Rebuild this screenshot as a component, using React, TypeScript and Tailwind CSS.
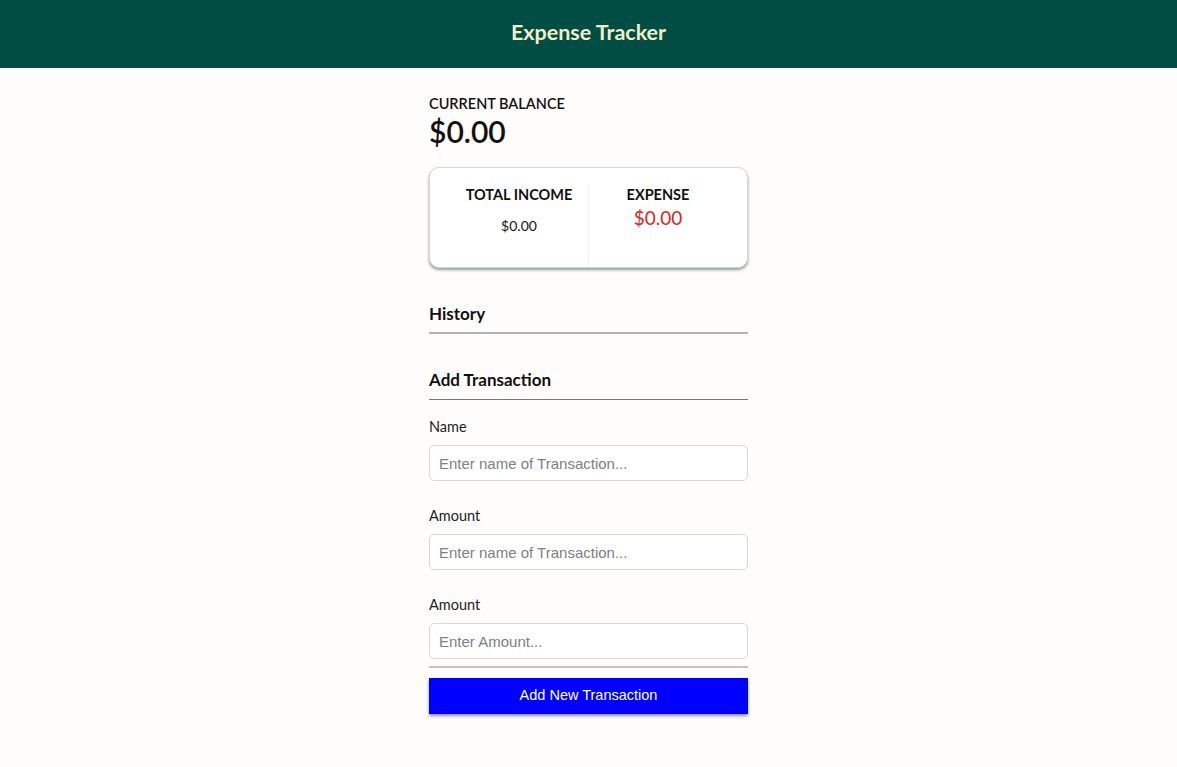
export default function App() {
  return (
    <div className="min-h-[767px] bg-[#fffdfb] font-['Lato','Liberation_Sans',sans-serif] text-[#111]">
      <header className="flex h-[68px] items-center justify-center bg-[#004d43] pb-[4px]">
        <h1 className="text-[21.5px] font-bold text-[#f3ecc9]">Expense Tracker</h1>
      </header>

      <main className="mx-auto w-[319px] pt-[26px]">
        <h4 className="text-[14.5px] font-semibold leading-[20px]">CURRENT BALANCE</h4>
        <h2 className="text-[30px] font-semibold leading-[34px]">$0.00</h2>

        {/* income / expense card */}
        <div className="mt-[19px] flex h-[101px] rounded-[10px] border border-[#d5d9d8] bg-white px-[20px] pt-[16px] shadow-[0_2px_3px_rgba(40,80,70,0.55)]">
          <div className="flex flex-1 flex-col items-center border-r border-[#f0f0f0] pb-[18px]">
            <h4 className="text-[14.5px] font-bold leading-[22px]">TOTAL INCOME</h4>
            <p className="mt-[10px] text-[14px] leading-[20px]">$0.00</p>
          </div>
          <div className="flex flex-1 flex-col items-center">
            <h4 className="text-[14.5px] font-bold leading-[22px]">EXPENSE</h4>
            <p className="text-[19px] leading-[24px] text-[#e02424]">$0.00</p>
          </div>
        </div>

        <h3 className="mt-[34px] border-b-2 border-[#b4b4b4] pb-[6px] text-[17px] font-bold leading-[24px]">
          History
        </h3>

        <h3 className="mt-[34px] border-b border-[#777] pb-[7px] text-[17px] font-bold leading-[24px]">
          Add Transaction
        </h3>

        <form className="mt-[17px]" onSubmit={(e) => e.preventDefault()}>
          <Field label="Name" placeholder="Enter name of Transaction..." />
          <Field label="Amount" placeholder="Enter name of Transaction..." />
          <Field label="Amount" placeholder="Enter Amount..." last />
          <div className="mt-[7px] border-t-2 border-[#c4c4c4]" />
          <button
            type="submit"
            className="mt-[10px] h-[36px] w-full bg-[#0000ff] font-['Liberation_Sans',sans-serif] text-[14.5px] text-white shadow-[0_2px_3px_rgba(0,0,80,0.45)]"
          >
            Add New Transaction
          </button>
        </form>
      </main>
    </div>
  );
}

function Field({ label, placeholder, last }: { label: string; placeholder: string; last?: boolean }) {
  return (
    <div className={last ? "" : "mb-[25px]"}>
      <label className="block text-[14.5px] leading-[20px] text-[#222]">{label}</label>
      <input
        type="text"
        placeholder={placeholder}
        className="mt-[8px] h-[36px] w-full rounded-[5px] border border-[#d9d9d9] bg-white px-[9px] font-['Liberation_Sans',sans-serif] text-[15px] outline-none placeholder:text-[#808080]"
      />
    </div>
  );
}
